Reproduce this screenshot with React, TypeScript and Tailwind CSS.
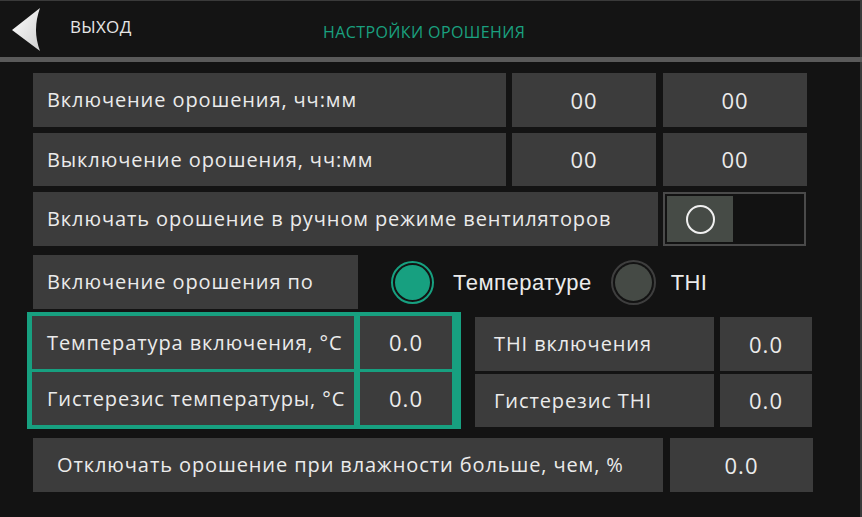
import React from "react";

const font = { fontFamily: '"Open Sans", "Noto Sans", sans-serif' };
const arial = { fontFamily: '"Liberation Sans", Arial, sans-serif' };

function Cell({ children, className = "" }: { children?: React.ReactNode; className?: string }) {
  return (
    <div className={`bg-[#3c3c3c] flex items-center text-[#ebebeb] text-[20px] tracking-[0.9px] ${className}`}>
      {children}
    </div>
  );
}

function Val({ children, className = "" }: { children?: React.ReactNode; className?: string }) {
  return (
    <div className={`bg-[#3c3c3c] flex items-center justify-center text-[#ebebeb] text-[22px] tracking-[1px] ${className}`}>
      {children}
    </div>
  );
}

export default function App() {
  return (
    <div className="w-[862px] h-[517px] bg-[#131313] overflow-hidden relative" style={font}>
      <div className="h-[57px] bg-[#141414] border-t border-[#3a3a3a] border-r-[2px] border-r-[#3a3a3a] flex items-center relative">
        <svg width="44" height="50" viewBox="0 0 44 50" className="ml-[8px] mt-[-2px]">
          <defs>
            <linearGradient id="ag" x1="0" y1="0" x2="1" y2="1">
              <stop offset="0" stopColor="#ffffff" />
              <stop offset="1" stopColor="#cfcfcf" />
            </linearGradient>
          </defs>
          <path d="M32 5 L4 27 L32 48 Q24 27 32 5 Z" fill="url(#ag)" />
        </svg>
        <span className="ml-[18px] text-[#e6e6e6] text-[17px] tracking-[0.3px] mt-[-4px]">ВЫХОД</span>
        <span className="absolute left-[323px] top-[19px] text-[#1aa07f] text-[16px] tracking-[0.4px]">НАСТРОЙКИ ОРОШЕНИЯ</span>
      </div>
      <div className="h-[5px] bg-[#5a5a5a]" />
      <div className="absolute right-0 top-[62px] bottom-0 w-[2px] bg-[#3a3a3a]" />

      <div className="pl-[33px] pt-[11px] flex flex-col">
        {/* row 1 */}
        <div className="flex h-[54px]">
          <Cell className="w-[473px] pl-[14px]">Включение орошения, чч:мм</Cell>
          <Val className="w-[144px] ml-[6px]">00</Val>
          <Val className="w-[144px] ml-[7px]">00</Val>
        </div>
        {/* row 2 */}
        <div className="flex h-[53px] mt-[6px]">
          <Cell className="w-[473px] pl-[14px]">Выключение орошения, чч:мм</Cell>
          <Val className="w-[144px] ml-[6px]">00</Val>
          <Val className="w-[144px] ml-[7px]">00</Val>
        </div>
        {/* row 3 */}
        <div className="flex h-[54px] mt-[6px]">
          <Cell className="w-[625px] pl-[14px]">Включать орошение в ручном режиме вентиляторов</Cell>
          <div className="w-[143px] ml-[5px] border-2 border-[#4a4a4a] bg-[#121212] p-[2px] flex">
            <div className="w-[66px] h-full bg-[#464b46] flex items-center justify-center">
              <div className="w-[29px] h-[29px] rounded-full border-[2.5px] border-[#f0f0f0]" />
            </div>
          </div>
        </div>
        {/* row 4 */}
        <div className="flex h-[54px] mt-[9px] items-center">
          <Cell className="w-[325px] h-full pl-[14px]">Включение орошения по</Cell>
          <div className="ml-[33px] w-[43px] h-[43px] rounded-full border-[2px] border-[#17a080] p-[2px]">
            <div className="w-full h-full rounded-full bg-[#17a080]" />
          </div>
          <span className="ml-[19px] text-[#ebebeb] text-[22px] tracking-[0.5px]" style={arial}>Температуре</span>
          <div className="ml-[19px] w-[45px] h-[45px] rounded-full border-[2px] border-[#3e3e3e] p-[2px]">
            <div className="w-full h-full rounded-full bg-[#454a45]" />
          </div>
          <span className="ml-[15px] text-[#ebebeb] text-[22px] tracking-[0.3px]" style={arial}>THI</span>
        </div>
        {/* green block */}
        <div className="flex mt-[3px]">
          <div className="ml-[-6px] w-[434px] bg-[#17a080] px-[5px] py-[4px] grid grid-cols-[322px_92px] gap-x-[6px] gap-y-[3px]">
            <Cell className="h-[53px] pl-[15px]">Температура включения, °C</Cell>
            <Val className="h-[53px]">0.0</Val>
            <Cell className="h-[53px] pl-[15px]">Гистерезис температуры, °C</Cell>
            <Val className="h-[53px]">0.0</Val>
          </div>
          <div className="ml-[14px] pt-[5px] grid grid-cols-[239px_92px] gap-x-[6px] gap-y-[3px] h-fit">
            <Cell className="h-[54px] pl-[19px]">THI включения</Cell>
            <Val className="h-[54px]">0.0</Val>
            <Cell className="h-[53px] pl-[19px]">Гистерезис THI</Cell>
            <Val className="h-[53px]">0.0</Val>
          </div>
        </div>
        {/* bottom */}
        <div className="flex h-[54px] mt-[9px]">
          <Cell className="w-[630px] pl-[24px]">Отключать орошение при влажности больше, чем, %</Cell>
          <Val className="w-[143px] ml-[7px]">0.0</Val>
        </div>
      </div>
    </div>
  );
}
